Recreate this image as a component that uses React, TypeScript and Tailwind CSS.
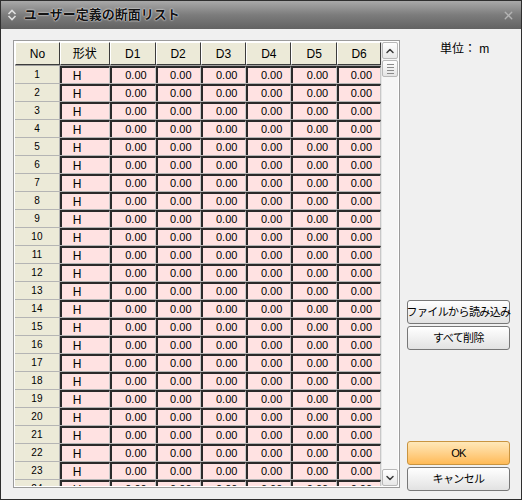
import { ChevronUp, ChevronDown, X } from "lucide-react";

const cols = [
  { key: "no", label: "No", w: "w-[45px]" },
  { key: "shape", label: "形状", w: "w-[50px]" },
  { key: "d1", label: "D1", w: "w-[46px]" },
  { key: "d2", label: "D2", w: "w-[45px]" },
  { key: "d3", label: "D3", w: "w-[46px]" },
  { key: "d4", label: "D4", w: "w-[45px]" },
  { key: "d5", label: "D5", w: "w-[46px]" },
  { key: "d6", label: "D6", w: "w-[44px]" },
];

const rows = Array.from({ length: 24 }, (_, i) => i + 1);

function HeaderRow() {
  return (
    <div className="flex h-[24px] shrink-0 border-b border-[#a0a0a0] text-[12px]">
      {cols.map((c) => (
        <div
          key={c.key}
          className={`${c.w} flex items-center justify-center border-t border-l border-t-white border-l-white border-r border-b border-r-[#3c3c3c] border-b-[#3c3c3c] bg-[#ecead8]`}
        >
          {c.label}
        </div>
      ))}
    </div>
  );
}

function DataRow({ n }: { n: number }) {
  return (
    <div className="flex h-[18px] shrink-0 border-b border-[#b4b4b4] text-[11px]">
      {cols.map((c) => {
        if (c.key === "no") {
          return (
            <div
              key={c.key}
              className={`${c.w} flex items-center justify-center border-r border-[#b4b4b4] bg-[#ecead8] text-[10px]`}
            >
              {n}
            </div>
          );
        }
        return (
          <div
            key={c.key}
            className={`${c.w} flex items-center border-t-2 border-l-2 border-[#2a2a2a] border-r border-r-[#c8c8c8] bg-[#ffe2e2] ${
              c.key === "shape" ? "pl-[11px] text-[12px]" : "justify-end pr-[8px]"
            }`}
          >
            {c.key === "shape" ? "H" : "0.00"}
          </div>
        );
      })}
    </div>
  );
}

function ScrollBar() {
  return (
    <div className="flex w-[17px] flex-col justify-between bg-[#f6f6f6] border-l border-[#e6e6e6]">
      <div className="flex flex-col">
        <div className="flex h-[17px] items-center justify-center rounded-[2px] border border-[#b8b8b8] bg-gradient-to-b from-white to-[#e8e8e8]">
          <ChevronUp className="h-3 w-3 text-[#3a3a3a]" strokeWidth={3} />
        </div>
        <div className="mt-[1px] flex h-[17px] flex-col items-center justify-center gap-[2px] rounded-[2px] border border-[#b8b8b8] bg-gradient-to-b from-white to-[#e4e4e4]">
          <div className="h-px w-[7px] bg-[#8a8a8a]" />
          <div className="h-px w-[7px] bg-[#8a8a8a]" />
          <div className="h-px w-[7px] bg-[#8a8a8a]" />
          <div className="h-px w-[7px] bg-[#8a8a8a]" />
        </div>
      </div>
      <div className="flex h-[17px] items-center justify-center rounded-[2px] border border-[#b8b8b8] bg-gradient-to-b from-white to-[#e8e8e8]">
        <ChevronDown className="h-3 w-3 text-[#3a3a3a]" strokeWidth={3} />
      </div>
    </div>
  );
}

function Btn({ children, primary }: { children: React.ReactNode; primary?: boolean }) {
  return (
    <button
      className={`flex h-[24px] w-[103px] items-center justify-center whitespace-nowrap rounded-[3px] border text-[11px] tracking-[-0.6px] text-black ${
        primary
          ? "border-[#c99440] bg-gradient-to-b from-[#ffe8b8] to-[#ffba55]"
          : "border-[#777] bg-gradient-to-b from-white to-[#e2e2e2]"
      }`}
    >
      {children}
    </button>
  );
}

export default function App() {
  return (
    <div
      className="flex h-[500px] w-[522px] flex-col border border-[#2e2e2e] bg-[#f0f0f0] text-[12px] text-black"
      style={{ fontFamily: '"Liberation Sans", "Noto Sans CJK JP", sans-serif' }}
    >
      <div className="flex h-[28px] shrink-0 items-center bg-gradient-to-b from-[#a9a9a9] via-[#7c7c7c] to-[#626262] pl-[6px] pr-[6px]">
        <svg width="10" height="12" viewBox="0 0 10 12" className="mr-[7px]">
          <path d="M1.5 5 L5 1.5 L8.5 5" fill="none" stroke="#e0e0e0" strokeWidth="1.6" />
          <path d="M1.5 7 L5 10.5 L8.5 7" fill="none" stroke="#e0e0e0" strokeWidth="1.6" />
        </svg>
        <span className="text-[13px] font-bold text-[#141414] [text-shadow:0_0_2px_#f4f4f4,0_0_1px_#fff]">
          ユーザー定義の断面リスト
        </span>
        <X className="ml-auto h-[13px] w-[13px] text-[#b4b4b4]" strokeWidth={2.5} />
      </div>
      <div className="flex flex-1 pl-[12px] pt-[11px]">
        <div className="flex h-[448px] w-[387px] border border-[#9c9c9c] bg-white p-[1px] pl-px">
          <div className="flex w-[367px] flex-col overflow-hidden bg-white">
            <HeaderRow />
            {rows.map((n) => (
              <DataRow key={n} n={n} />
            ))}
          </div>
          <ScrollBar />
        </div>
        <div className="flex flex-1 flex-col pl-[7px]">
          <div className="pl-[33px] text-[12px]">単位： m</div>
          <div className="mt-[242px] flex flex-col gap-[2px]">
            <Btn>ファイルから読み込み</Btn>
            <Btn>すべて削除</Btn>
          </div>
          <div className="mt-[91px] flex flex-col gap-[2px]">
            <Btn primary>OK</Btn>
            <Btn>キャンセル</Btn>
          </div>
        </div>
      </div>
    </div>
  );
}
